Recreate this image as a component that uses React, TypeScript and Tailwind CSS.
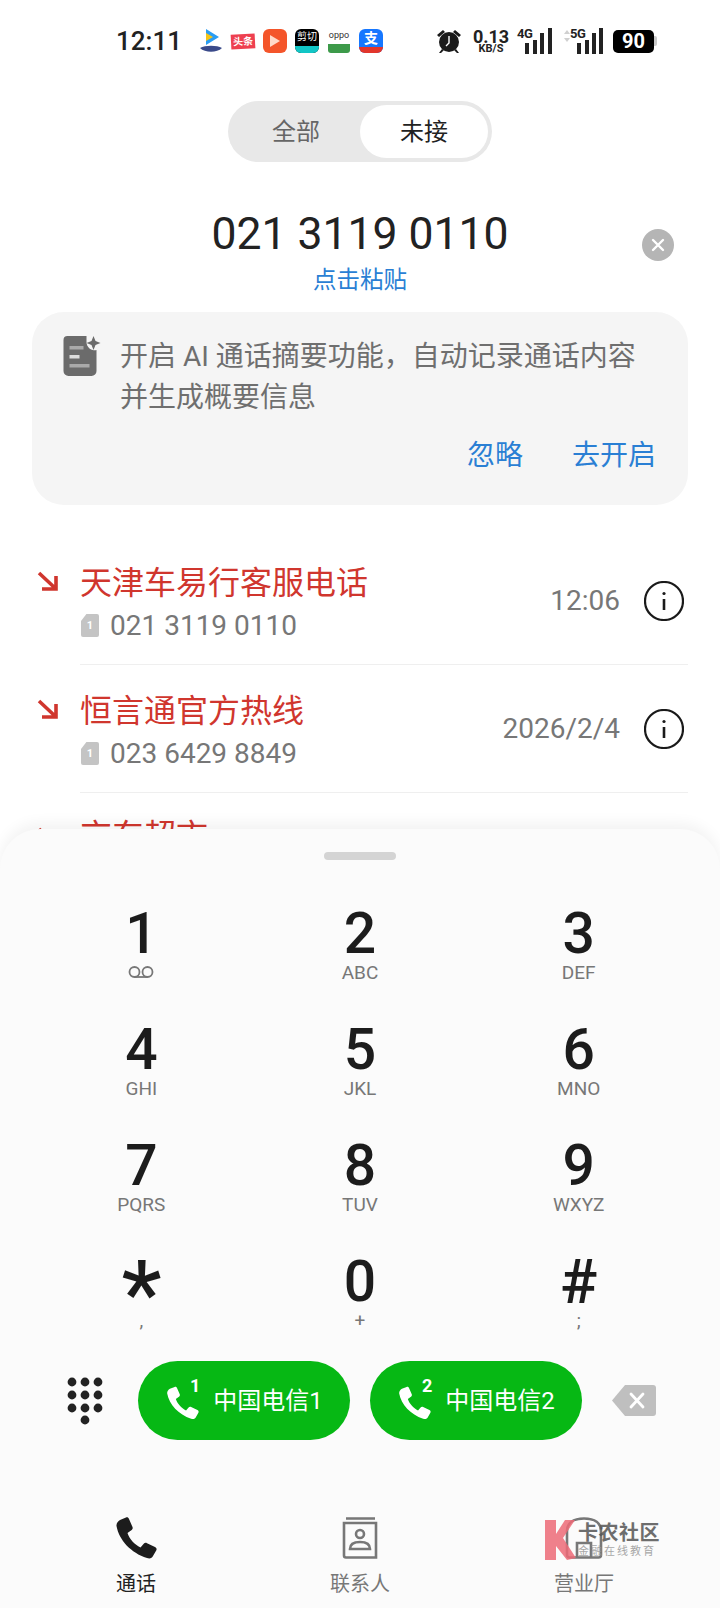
const font = { fontFamily: 'Roboto, "Noto Sans CJK SC", sans-serif' };

const keys = [
  { d: '1', sub: '' },
  { d: '2', sub: 'ABC' },
  { d: '3', sub: 'DEF' },
  { d: '4', sub: 'GHI' },
  { d: '5', sub: 'JKL' },
  { d: '6', sub: 'MNO' },
  { d: '7', sub: 'PQRS' },
  { d: '8', sub: 'TUV' },
  { d: '9', sub: 'WXYZ' },
  { d: '*', sub: ',' },
  { d: '0', sub: '+' },
  { d: '#', sub: ';' },
];

const handset =
  'M5 3 L11 0.5 C12.5 0 13.5 0.8 14 2 L17.5 10 C18 11.5 17.5 12.5 16 13.5 L12.5 16 C14.5 22 19.5 27.5 25.5 30.5 L28.5 27 C29.5 26 30.5 25.5 32 26.2 L40 30 C41.5 30.8 42 32 41.2 33.5 L38 39 C37 41 35 42 32 41 C16 36 4 23 1.5 9 C1.2 6.5 3 4 5 3 Z';

function Signal({ label, bars }: { label: string; bars: number[] }) {
  return (
    <div className="relative h-[26px] w-[34px]">
      <svg className="absolute left-0 top-0" width="34" height="26" viewBox="0 0 34 26" fill="#222">
        <rect x={bars[0]} y="15" width="4" height="11" />
        <rect x={bars[1]} y="12" width="4" height="14" />
        <rect x={bars[2]} y="5" width="4" height="21" />
        <rect x={bars[3]} y="0" width="4" height="26" />
      </svg>
      <span className="absolute left-[-1px] top-[0px] bg-white text-[13px] font-bold leading-[12px] tracking-[-0.5px] text-[#222]">{label}</span>
    </div>
  );
}

function AppIcons() {
  return (
    <div className="ml-[17px] flex items-center gap-[8px]">
      {/* video app */}
      <svg width="24" height="26" viewBox="0 0 24 26">
        <path d="M7 1 L20 9 L7 17 Z" fill="#2a9df4" />
        <path d="M7 5 L14 9 L7 13 Z" fill="#f5c518" />
        <path d="M1 20 C6 17 18 17 23 20 C18 25 6 25 1 20 Z" fill="#3a4a8a" />
      </svg>
      <div className="flex h-[15px] w-[24px] -rotate-3 items-center justify-center bg-[#ee4050] text-[10px] font-bold leading-none text-white">头条</div>
      <div className="flex h-[24px] w-[24px] items-center justify-center rounded-[6px] bg-[#f4552a]">
        <svg width="12" height="14" viewBox="0 0 12 14"><path d="M1 1 L11 7 L1 13 Z" fill="#ffd9c8" /></svg>
      </div>
      <div className="flex h-[24px] w-[24px] flex-col overflow-hidden rounded-[6px] bg-black">
        <span className="flex-1 text-center text-[10px] leading-[16px] text-white">剪切</span>
        <span className="h-[7px] bg-[#12c6c6]" />
      </div>
      <div className="flex h-[24px] w-[24px] flex-col items-center justify-between">
        <span className="text-[9px] leading-[12px] text-[#333]">oppo</span>
        <span className="h-[9px] w-[22px] rounded-b-[3px] bg-[#3d9a4a]" />
      </div>
      <div className="flex h-[24px] w-[24px] flex-col overflow-hidden rounded-[6px] bg-[#1677ff]">
        <span className="flex-1 text-center text-[14px] font-bold leading-[18px] text-white">支</span>
        <span className="h-[6px] bg-[#e2362c]" />
      </div>
    </div>
  );
}

function StatusBar() {
  return (
    <div className="flex h-[82px] items-center pl-[116px] pr-[63px]">
      <span className="text-[26px] font-medium leading-none text-[#222]">12:11</span>
      <AppIcons />
      <div className="ml-auto flex items-center">
        <svg width="26" height="26" viewBox="0 0 26 26" fill="#1a1a1a">
          <circle cx="13" cy="14" r="10" />
          <path d="M1 7 L7 2 L9 4 L3 9 Z M25 7 L19 2 L17 4 L23 9 Z M6 21 L3 25 L5 25 L8 22 Z M20 21 L23 25 L21 25 L18 22 Z" />
          <path d="M13 8 V15 L10 18" stroke="#fff" strokeWidth="1.4" fill="none" />
        </svg>
        <div className="ml-[12px] flex w-[34px] flex-col items-center font-bold text-[#222]">
          <span className="text-[18px] leading-[15px]">0.13</span>
          <span className="text-[11px] leading-[10px]">KB/S</span>
        </div>
        <div className="ml-[10px]"><Signal label="4G" bars={[7, 15, 22, 30]} /></div>
        <svg className="ml-[12px] mb-[10px]" width="6" height="12" viewBox="0 0 6 12" fill="#d0d0d0">
          <path d="M3 0 L6 4 H0 Z M3 12 L0 8 H6 Z" />
        </svg>
        <div className="ml-[1px]"><Signal label="5G" bars={[6, 14, 21, 28]} /></div>
        <div className="ml-[8px] flex items-center">
          <div className="flex h-[23px] w-[41px] items-center justify-center rounded-[5px] bg-black text-[20px] font-bold leading-none text-white">90</div>
          <div className="h-[10px] w-[3px] rounded-r-[2px] bg-[#c8c8c8]" />
        </div>
      </div>
    </div>
  );
}

function Tabs() {
  return (
    <div className="flex justify-center pt-[19px]">
      <div className="flex h-[61px] w-[264px] items-center rounded-full bg-[#e8e8e8] p-[4px] pr-[4px]">
        <div className="flex w-[128px] justify-center text-[24px] leading-none text-[#666]">全部</div>
        <div className="flex h-[53px] w-[128px] items-center justify-center rounded-full bg-white text-[24px] leading-none text-[#222]">未接</div>
      </div>
    </div>
  );
}

function Dialed() {
  return (
    <div className="relative mt-[44px] flex flex-col items-center">
      <div className="text-[44.5px] leading-[56px] text-[#222]">021 3119 0110</div>
      <div className="mt-[2px] text-[23.5px] leading-[32px] text-[#2a7fd4]">点击粘贴</div>
      <div className="absolute left-[642px] top-[23px] flex h-[32px] w-[32px] items-center justify-center rounded-full bg-[#b5b5b5]">
        <svg width="14" height="14" viewBox="0 0 14 14" stroke="#fff" strokeWidth="2.4" strokeLinecap="round">
          <path d="M2 2 L12 12 M12 2 L2 12" />
        </svg>
      </div>
    </div>
  );
}

function AiCard() {
  return (
    <div className="mx-[32px] mt-[16px] h-[193px] rounded-[32px] bg-[#f5f5f5] pl-[31px] pr-[32px] pt-[24px]">
      <div className="flex">
        <svg className="shrink-0" width="39" height="40" viewBox="0 0 38 40">
          <path d="M4 0 H23 V6 A8 8 0 0 0 33 14 V35 A5 5 0 0 1 28 40 H5 A5 5 0 0 1 0 35 V4 A4 4 0 0 1 4 0 Z" fill="#6b6b6b" />
          <rect x="6" y="10" width="14" height="3.5" fill="#aaa" />
          <rect x="6" y="19" width="10" height="3.5" fill="#ddd" />
          <rect x="6" y="28" width="20" height="3.5" fill="#aaa" />
          <path d="M30 0 L32 5 L37 7 L32 9 L30 14 L28 9 L23 7 L28 5 Z" fill="#6b6b6b" />
        </svg>
        <p className="ml-[18px] w-[520px] text-[28px] leading-[41px] text-[#6f6f6f]">开启 AI 通话摘要功能，自动记录通话内容并生成概要信息</p>
      </div>
      <div className="mt-[18px] flex justify-end gap-[49px] text-[28px] leading-[40px] text-[#2a7fd4]">
        <span>忽略</span>
        <span>去开启</span>
      </div>
    </div>
  );
}

function MissedArrow() {
  return (
    <svg width="22" height="22" viewBox="0 0 22 22" fill="none" stroke="#d0362e" strokeWidth="3.6">
      <path d="M2 3 L18 18 M19 6 V19 H5" />
    </svg>
  );
}

function SimBadge() {
  return (
    <div className="ml-[1px] flex h-[23px] w-[18px] items-center justify-center rounded-[2px] bg-[#c4c4c4] text-[11px] font-bold leading-none text-white [clip-path:polygon(30%_0,100%_0,100%_100%,0_100%,0_30%)]">1</div>
  );
}

function CallRow({ name, number, time }: { name: string; number: string; time: string }) {
  return (
    <div className="flex h-[128px] pl-[37px] pr-[32px]">
      <div className="pt-[33px]"><MissedArrow /></div>
      <div className="ml-[21px] flex flex-1 items-center border-b border-[#efefef]">
        <div className="min-w-0 flex-1 pt-[5px]">
          <div className="text-[32px] leading-[40px] text-[#d0362e]">{name}</div>
          <div className="mt-[5px] flex items-center">
            <SimBadge />
            <span className="ml-[11px] text-[28px] leading-[36px] text-[#777]">{number}</span>
          </div>
        </div>
        <span className="text-[28px] leading-none text-[#777]">{time}</span>
        <svg className="ml-[24px] mr-[4px]" width="40" height="40" viewBox="0 0 40 40" fill="none" stroke="#1a1a1a">
          <circle cx="20" cy="20" r="19" strokeWidth="2.2" />
          <path d="M20 18 V29" strokeWidth="2.6" />
          <circle cx="20" cy="12.5" r="1.6" fill="#1a1a1a" stroke="none" />
        </svg>
      </div>
    </div>
  );
}

function Voicemail() {
  return (
    <svg width="26" height="14" viewBox="0 0 26 14" fill="none" stroke="#777" strokeWidth="1.8">
      <circle cx="6.5" cy="7" r="5" />
      <circle cx="19.5" cy="7" r="5" />
      <path d="M6.5 12 H19.5" />
    </svg>
  );
}

function KeyPad() {
  return (
    <div className="mt-[47px] grid grid-cols-3 px-[32px]">
      {keys.map((k) => (
        <div key={k.d} className="flex h-[116px] flex-col items-center">
          {k.d === '*' ? (
            <span className="h-[54px] translate-y-[13px] text-[90px] font-medium leading-[54px] text-[#1c1c1c]">*</span>
          ) : k.d === '#' ? (
            <span className="h-[54px] text-[62px] font-medium leading-[54px] text-[#1c1c1c]">#</span>
          ) : (
            <span className="text-[57px] font-medium leading-[54px] text-[#1c1c1c]">{k.d}</span>
          )}
          <span className="flex h-[22px] items-center text-[19px] leading-none text-[#777]">
            {k.d === '1' ? <Voicemail /> : k.sub}
          </span>
        </div>
      ))}
    </div>
  );
}

function DotPad() {
  return (
    <svg width="36" height="48" viewBox="0 0 36 48" fill="#222">
      {[5, 18, 31].map((x) =>
        [5, 18, 31].map((y) => <circle key={`${x}-${y}`} cx={x} cy={y} r="4.4" />),
      )}
      <circle cx="18" cy="43" r="4.4" />
    </svg>
  );
}

function CallButton({ sim, label }: { sim: string; label: string }) {
  return (
    <div className="flex h-[79px] w-[212px] items-center justify-center rounded-full bg-[#06b814] text-white">
      <div className="relative mr-[12px] h-[38px] w-[36px]">
        <svg className="absolute bottom-[-1px] left-[1px]" width="33" height="36" viewBox="0 0 42 42" fill="#fff">
          <path d={handset} />
        </svg>
        <span className="absolute right-[1px] top-[-5px] text-[18px] font-bold leading-none">{sim}</span>
      </div>
      <span className="text-[24px] leading-none">{label}</span>
    </div>
  );
}

function Backspace() {
  return (
    <svg width="44" height="31" viewBox="0 0 44 31">
      <path d="M13 0 H41 A3 3 0 0 1 44 3 V28 A3 3 0 0 1 41 31 H13 L0 15.5 Z" fill="#bfbfbf" />
      <path d="M19 9 L31 22 M31 9 L19 22" stroke="#fff" strokeWidth="2.8" strokeLinecap="round" />
    </svg>
  );
}

function BottomNav() {
  return (
    <div className="mt-[77px] grid grid-cols-3 px-[24px] text-center">
      <div className="flex flex-col items-center">
        <svg width="42" height="42" viewBox="0 0 42 42" fill="#1c1c1c">
          <path d={handset} />
        </svg>
        <span className="mt-[12px] text-[20px] leading-[26px] text-[#222]">通话</span>
      </div>
      <div className="flex flex-col items-center">
        <svg width="42" height="42" viewBox="0 0 36 42" fill="none" stroke="#777" strokeWidth="2.6">
          <path d="M4 1.5 H33 M2 6 H34 V40.5 H4 A2 2 0 0 1 2 38.5 V6 Z" />
          <circle cx="18" cy="17" r="4" />
          <path d="M8 32 C8 26 13 25 18 25 C23 25 28 26 28 32 Z" />
        </svg>
        <span className="mt-[12px] text-[20px] leading-[26px] text-[#777]">联系人</span>
      </div>
      <div className="flex flex-col items-center">
        <svg width="42" height="42" viewBox="0 0 42 42" fill="none" stroke="#777" strokeWidth="2.6">
          <path d="M4 38 V14 C4 6 10 1.5 21 1.5 C32 1.5 38 6 38 14 V38 A2.5 2.5 0 0 1 35.5 40.5 H6.5 A2.5 2.5 0 0 1 4 38 Z" />
          <path d="M14 40 V26 H28 V40" />
        </svg>
        <span className="mt-[12px] text-[20px] leading-[26px] text-[#777]">营业厅</span>
      </div>
    </div>
  );
}

function Watermark() {
  return (
    <div className="absolute left-[543px] top-[1518px] flex items-center opacity-85">
      <svg width="34" height="44" viewBox="0 0 34 44" fill="#ee6b78">
        <path d="M2 2 H13 V16 L22 2 H32 L20 20 L33 40 L24 42 L13 28 V42 H2 Z" />
      </svg>
      <div className="ml-[1px] flex flex-col">
        <span className="text-[20px] font-bold leading-[24px] tracking-[0.5px] text-[#555]">卡农社区</span>
        <span className="text-[11px] leading-[14px] tracking-[2px] text-[#999]">金融在线教育</span>
      </div>
    </div>
  );
}

export default function App() {
  return (
    <div className="relative h-[1608px] w-[720px] overflow-hidden bg-white" style={font}>
      <StatusBar />
      <Tabs />
      <Dialed />
      <AiCard />
      <div className="mt-[32px]">
        <CallRow name="天津车易行客服电话" number="021 3119 0110" time="12:06" />
        <CallRow name="恒言通官方热线" number="023 6429 8849" time="2026/2/4" />
        <div className="flex pl-[37px]">
          <div className="pt-[33px]"><MissedArrow /></div>
          <div className="ml-[21px] pt-[23px] text-[32px] leading-[40px] text-[#d0362e]">京东超市</div>
        </div>
      </div>

      {/* dial sheet lies over the list */}
      <div className="absolute inset-x-0 top-[829px] h-[779px] rounded-t-[40px] bg-[#fbfbfb] shadow-[0_-6px_14px_rgba(0,0,0,0.05)]">
        <div className="mx-auto mt-[23px] h-[8px] w-[72px] rounded-full bg-[#d4d4d4]" />
        <KeyPad />
        <div className="mt-[-10px] flex h-[79px] items-center pl-[67px]">
          <DotPad />
          <div className="ml-[35px] flex gap-[20px]">
            <CallButton sim="1" label="中国电信1" />
            <CallButton sim="2" label="中国电信2" />
          </div>
          <div className="ml-[30px]"><Backspace /></div>
        </div>
        <BottomNav />
      </div>
      <Watermark />
    </div>
  );
}
